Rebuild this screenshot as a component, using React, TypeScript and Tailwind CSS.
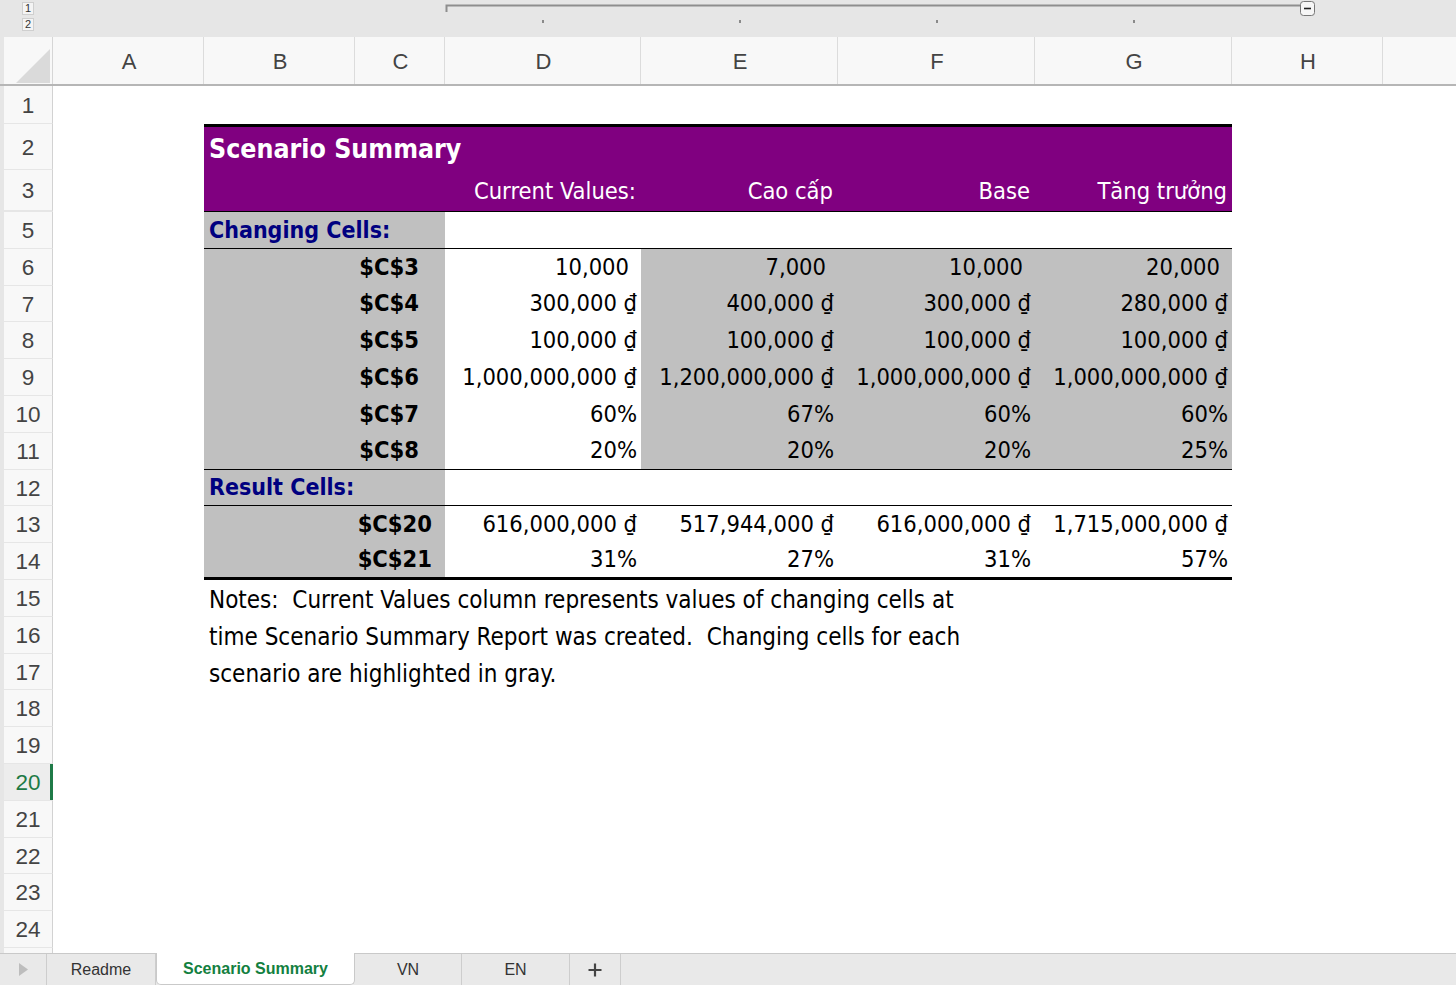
import React from 'react';

const SHEET = "font-['Liberation_Sans_Narrow','DejaVu_Sans_Condensed',sans-serif]";
const UI = "font-['Liberation_Sans',Arial,sans-serif]";
const GRID = 'grid grid-cols-[49px_151px_151px_90px_196px_197px_197px_197px_151px_1fr] grid-rows-[100%]';
const INNER = 'grid grid-cols-[151px_90px_196px_197px_197px_197px] grid-rows-[100%]';

const COLS = [
  { name: 'A', w: 'w-[151px]' },
  { name: 'B', w: 'w-[151px]' },
  { name: 'C', w: 'w-[90px]' },
  { name: 'D', w: 'w-[196px]' },
  { name: 'E', w: 'w-[197px]' },
  { name: 'F', w: 'w-[197px]' },
  { name: 'G', w: 'w-[197px]' },
  { name: 'H', w: 'w-[151px]' },
];

// rows from 5 on average 36.8px, kept on whole pixels so the borders stay crisp
const rowH = (n: number) => ((n - 5) % 5 === 2 ? 'h-[36px]' : 'h-[37px]');

type RowProps = {
  n?: number;
  h: string;
  selected?: boolean;
  hiddenBelow?: boolean;
  children?: React.ReactNode;
};

function Row({ n, h, selected, hiddenBelow, children }: RowProps) {
  return (
    <div className={`${GRID} ${h} overflow-hidden leading-none`}>
      <div
        className={`${UI} relative flex items-center justify-center border-r border-b border-r-[#d2d2d2] border-b-[#e6e6e6] pt-[3px] text-[22.5px] ${
          selected ? 'bg-[#ededed] text-[#1d7a45]' : 'bg-[#f8f8f8] text-[#444]'
        } ${hiddenBelow ? 'border-b-2 border-b-[#1f7a47]' : ''}`}
      >
        {n}
        {selected && <span className="absolute right-[-1px] top-0 h-full w-[3px] bg-[#1f7a47]" />}
      </div>
      {children}
    </div>
  );
}

// a cell with right aligned number text
function Num({ v, bg, pad = 'pr-[4px]' }: { v: string; bg?: string; pad?: string }) {
  return (
    <div className={`flex items-center justify-end whitespace-nowrap ${pad} ${bg ?? 'bg-white'}`}>
      {v}
    </div>
  );
}

const changing = [
  { label: '$C$3', vals: ['10,000', '7,000', '10,000', '20,000'] },
  { label: '$C$4', vals: ['300,000 ₫', '400,000 ₫', '300,000 ₫', '280,000 ₫'] },
  { label: '$C$5', vals: ['100,000 ₫', '100,000 ₫', '100,000 ₫', '100,000 ₫'] },
  { label: '$C$6', vals: ['1,000,000,000 ₫', '1,200,000,000 ₫', '1,000,000,000 ₫', '1,000,000,000 ₫'] },
  { label: '$C$7', vals: ['60%', '67%', '60%', '60%'] },
  { label: '$C$8', vals: ['20%', '20%', '20%', '25%'] },
];

const results = [
  { label: '$C$20', vals: ['616,000,000 ₫', '517,944,000 ₫', '616,000,000 ₫', '1,715,000,000 ₫'] },
  { label: '$C$21', vals: ['31%', '27%', '31%', '57%'] },
];

const notes = [
  'Notes:  Current Values column represents values of changing cells at',
  'time Scenario Summary Report was created.  Changing cells for each',
  'scenario are highlighted in gray.',
];

function TopBar() {
  return (
    <div className="relative h-[37px] bg-[#e6e6e6]">
      <div className={`${UI} flex flex-col gap-[3px] pl-[22px] pt-[2px]`}>
        <div className="flex h-[13px] w-[12px] items-center justify-center border border-[#cfcfcf] bg-[#f4f4f4] text-[11px] leading-none text-[#333]">
          1
        </div>
        <div className="flex h-[13px] w-[12px] items-center justify-center border border-[#cfcfcf] bg-[#f4f4f4] text-[11px] leading-none text-[#333]">
          2
        </div>
      </div>
      <svg className="absolute inset-0" width="1456" height="37" viewBox="0 0 1456 37">
        <path d="M446.5 12 V5.5 H1301" stroke="#8e8e8e" strokeWidth="2" fill="none" />
        <rect x="1300.5" y="1.5" width="14" height="14" rx="3" fill="#f6f6f6" stroke="#777" />
        <line x1="1304" y1="8.5" x2="1311" y2="8.5" stroke="#222" strokeWidth="1.6" />
        {[542, 739, 936, 1133].map((x) => (
          <rect key={x} x={x} y="20" width="2" height="3" fill="#8a8a8a" />
        ))}
      </svg>
    </div>
  );
}

function ColumnHeader() {
  return (
    <div className="flex h-[49px] border-b-2 border-[#b6b6b6] bg-[#e6e6e6] pl-[4px]">
      <div className="w-[49px] border-r border-[#d6d6d6] bg-[#f8f8f8] p-[6px]">
        <svg width="40" height="40" viewBox="0 0 40 40">
          <polygon points="6,40 40,40 40,6" fill="#dadada" />
        </svg>
      </div>
      {COLS.map((c) => (
        <div
          key={c.name}
          className={`${UI} ${c.w} flex items-center justify-center border-r border-[#dcdcdc] bg-[#f8f8f8] pt-[2px] pl-[2px] text-[22px] text-[#444]`}
        >
          {c.name}
        </div>
      ))}
      <div className="flex-1 bg-[#f8f8f8]" />
    </div>
  );
}

function Sheet() {
  const rowsAfter = [15, 16, 17, 18, 19, 20, 21, 22, 23, 24];
  return (
    <div className="flex-1 overflow-hidden bg-[#e6e6e6] pl-[4px]">
      <div className={`${SHEET} bg-white text-[23.5px] text-black`}>
        <Row n={1} h="h-[38px]" />
        <Row n={2} h="h-[46px]">
          <div className="col-start-3 col-span-6 flex items-center border-t-[3px] border-black bg-[#800080] pl-[5px] pt-[1px]">
            <span className="text-[26.5px] font-bold text-white">Scenario Summary</span>
          </div>
        </Row>
        <Row n={3} h="h-[42px]" hiddenBelow>
          <div className={`col-start-3 col-span-6 ${INNER} border-b border-black bg-[#800080] text-white`}>
            <div className="col-start-3 flex items-center justify-end pr-[5px] pt-[2px]">Current Values:</div>
            <div className="flex items-center justify-end pr-[5px] pt-[2px]">Cao cấp</div>
            <div className="flex items-center justify-end pr-[5px] pt-[2px]">Base</div>
            <div className="flex items-center justify-end pr-[5px] pt-[2px]">Tăng trưởng</div>
          </div>
        </Row>
        <Row n={5} h={rowH(5)}>
          <div className={`col-start-3 col-span-6 ${INNER} border-b border-black`}>
            <div className="col-span-2 flex items-center whitespace-nowrap bg-[#c0c0c0] pl-[5px] text-[23px] font-bold text-[#000080]">
              Changing Cells:
            </div>
          </div>
        </Row>
        {changing.map((r, i) => (
          <Row key={r.label} n={6 + i} h={rowH(6 + i)}>
            <div
              className={`col-start-3 col-span-6 ${INNER} ${
                i === changing.length - 1 ? 'border-b border-black' : ''
              }`}
            >
              <div className="col-span-2 flex items-center justify-end bg-[#c0c0c0] pr-[26px] font-bold">
                {r.label}
              </div>
              {r.vals.map((v, j) => (
                <Num
                  key={j}
                  v={v}
                  bg={j === 0 ? 'bg-white' : 'bg-[#c0c0c0]'}
                  pad={i === 0 ? 'pr-[12px]' : 'pr-[4px]'}
                />
              ))}
            </div>
          </Row>
        ))}
        <Row n={12} h={rowH(12)}>
          <div className={`col-start-3 col-span-6 ${INNER} border-b border-black`}>
            <div className="col-span-2 flex items-center whitespace-nowrap bg-[#c0c0c0] pl-[5px] text-[23px] font-bold text-[#000080]">
              Result Cells:
            </div>
          </div>
        </Row>
        {results.map((r, i) => (
          <Row key={r.label} n={13 + i} h={rowH(13 + i)}>
            <div
              className={`col-start-3 col-span-6 ${INNER} ${
                i === results.length - 1 ? 'border-b-[3px] border-black' : ''
              }`}
            >
              <div className="col-span-2 flex items-center justify-end bg-[#c0c0c0] pr-[13px] font-bold">
                {r.label}
              </div>
              {r.vals.map((v, j) => (
                <Num key={j} v={v} />
              ))}
            </div>
          </Row>
        ))}
        {rowsAfter.map((n) => (
          <Row key={n} n={n} h={rowH(n)} selected={n === 20}>
            {n - 15 < notes.length && (
              <div className="col-start-3 flex items-center whitespace-pre pl-[5px] pt-[3px] text-[24px]">
                {notes[n - 15]}
              </div>
            )}
          </Row>
        ))}
        <Row h="h-[37px]" />
      </div>
    </div>
  );
}

function TabBar() {
  const tab = `${UI} flex items-center justify-center border-r border-[#cdcdcd] text-[16px] text-[#333]`;
  return (
    <div className="flex h-[32px] border-t border-[#c9c9c9] bg-[#e9e9e9]">
      <div className="flex w-[47px] items-center justify-center border-r border-[#cdcdcd]">
        <svg width="9" height="13" viewBox="0 0 9 13">
          <polygon points="0,0 9,6.5 0,13" fill="#bdbdbd" />
        </svg>
      </div>
      <div className={`${tab} w-[109px]`}>Readme</div>
      <div
        className={`${UI} -mt-px flex w-[199px] items-center justify-center rounded-b-[5px] border border-t-0 border-[#c9c9c9] bg-white text-[16px] font-bold text-[#13803f]`}
      >
        Scenario Summary
      </div>
      <div className={`${tab} w-[107px]`}>VN</div>
      <div className={`${tab} w-[108px]`}>EN</div>
      <div className={`${tab} w-[51px]`}>
        <svg width="14" height="14" viewBox="0 0 14 14">
          <path d="M7 0.5 V13.5 M0.5 7 H13.5" stroke="#444" strokeWidth="2.2" />
        </svg>
      </div>
      <div className="flex-1" />
    </div>
  );
}

export default function App() {
  return (
    <div className="flex h-[985px] w-[1456px] flex-col overflow-hidden bg-[#e6e6e6]">
      <TopBar />
      <ColumnHeader />
      <Sheet />
      <TabBar />
    </div>
  );
}
